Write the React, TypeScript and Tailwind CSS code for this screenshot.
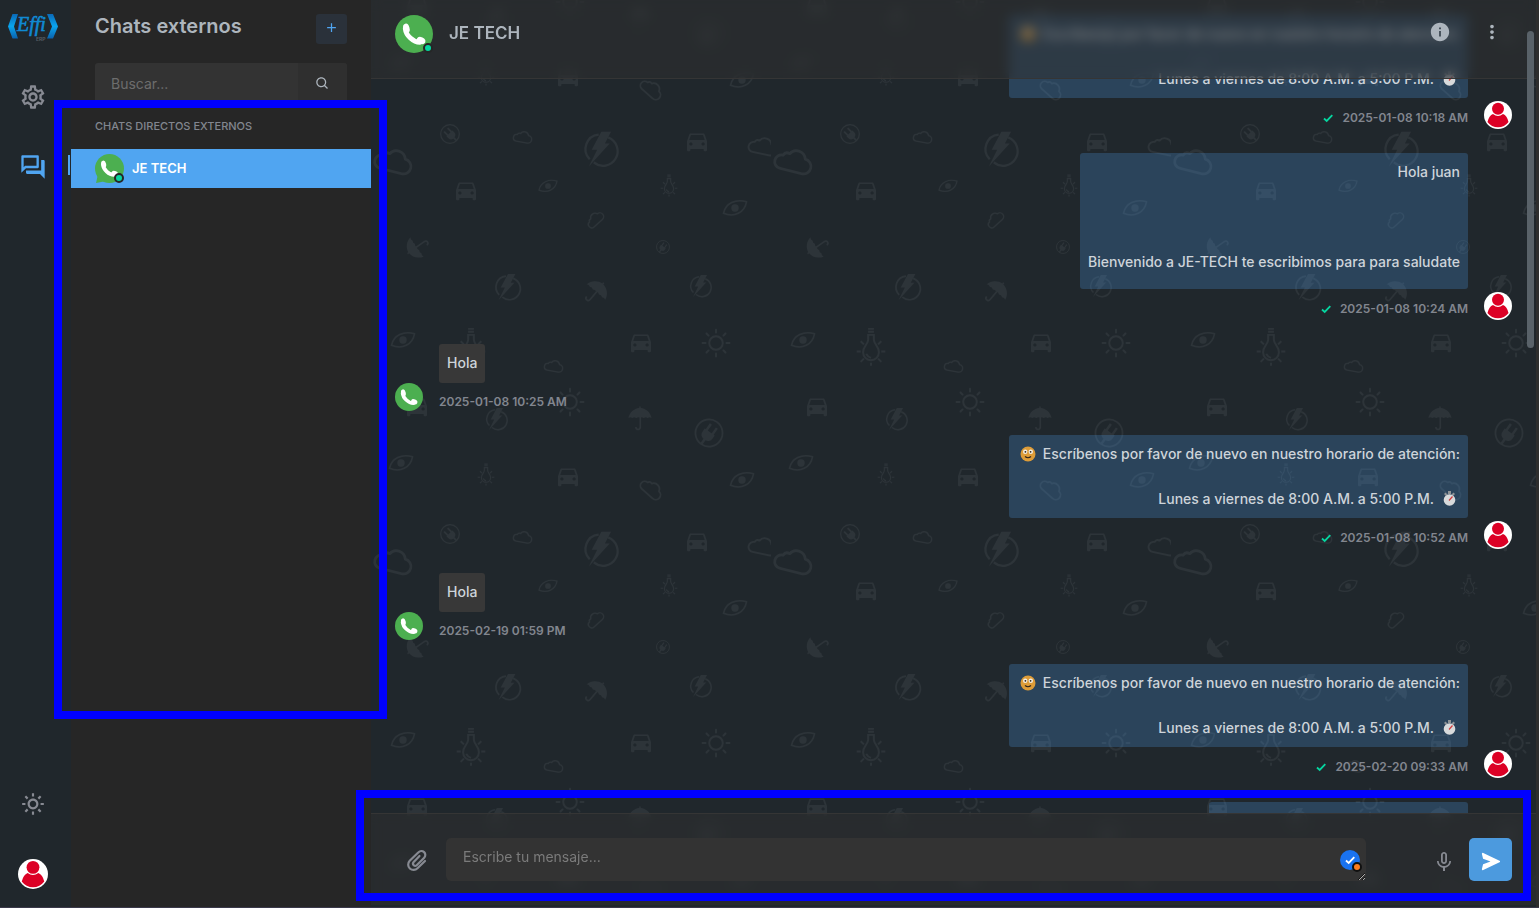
import React from 'react';
import {
  MdOutlineSettings,
  MdOutlineForum,
  MdDirectionsCar,
  MdMoreVert,
  MdInfo,
  MdMicNone,
} from 'react-icons/md';
import { BiSearch, BiSun, BiSolidSend, BiPlus } from 'react-icons/bi';

const PATTERN_COLOR = '#2d3439';

interface GlyphProps {
  x: number;
  y: number;
  size: number;
  rotate?: number;
}

// Every glyph is drawn on a 24x24 box centred on 0,0
const Place: React.FC<GlyphProps & { children: React.ReactNode }> = ({ x, y, size, rotate = 0, children }) => (
  <g transform={`translate(${x} ${y}) rotate(${rotate}) scale(${size / 24})`}>{children}</g>
);

const Car: React.FC<GlyphProps> = (props) => (
  <Place {...props}>
    <MdDirectionsCar x={-16} y={-17} size={32} color={PATTERN_COLOR} />
  </Place>
);

const Umbrella: React.FC<GlyphProps> = (props) => (
  <Place {...props}>
    <path d="M-12 0C-11-6-6-10-.7-10.500V-12H.7V-10.500C6-10 11-6 12 0Q10-1.500 8 0 6-1.500 4 0 2-1.500 0-.5-2-1.500-4 0-6-1.500-8 0-10-1.500-12 0Z" fill={PATTERN_COLOR} />
    <path d="M.3-1V9.500Q.3 12-2 12T-4.300 9.500" fill="none" stroke={PATTERN_COLOR} strokeWidth={1.6} />
  </Place>
);

const Eye: React.FC<GlyphProps> = (props) => (
  <Place {...props}>
    <path d="M-12 5.500C-10-5 1-10 12-6.500 10 5-1 10-12 5.500Z" fill="none" stroke={PATTERN_COLOR} strokeWidth={1.6} />
    <circle r={3.8} fill={PATTERN_COLOR} />
  </Place>
);

const Bolt: React.FC<GlyphProps> = (props) => (
  <Place {...props}>
    <path d="M6-8.300A10.600 10.600 0 1 1-4.500 9.800M-7.500 7.500A10.600 10.600 0 0 1-1-10.500" fill="none" stroke={PATTERN_COLOR} strokeWidth={1.6} />
    <path d="M1-12.500H8L3.500-4H7L-8 12.500-2 .5H-6Z" fill={PATTERN_COLOR} />
  </Place>
);

const Plug: React.FC<GlyphProps> = (props) => (
  <Place {...props}>
    <circle r={11.2} fill="none" stroke={PATTERN_COLOR} strokeWidth={1.4} />
    <path d="M-5-1H5V2Q5 6 1 6.500V11H-1V6.500Q-5 6-5 2ZM-4-7h2v6H-4ZM2-7h2v6H2Z" fill={PATTERN_COLOR} />
  </Place>
);

const Cloud: React.FC<GlyphProps & { stroke?: number }> = ({ stroke = 1.8, ...props }) => (
  <Place {...props}>
    <path
      d="M-8 7A4.500 4.500 0 0 1-8-2Q-7-5-4-4A6 6 0 0 1 7-3 5 5 0 0 1 7 7Z"
      fill="none"
      stroke={PATTERN_COLOR}
      strokeWidth={stroke}
      strokeLinejoin="round"
    />
  </Place>
);

const Sun: React.FC<GlyphProps> = (props) => (
  <Place {...props}>
    <circle r={5.8} fill="none" stroke={PATTERN_COLOR} strokeWidth={1.6} />
    {[0, 45, 90, 135, 180, 225, 270, 315].map((angle) => (
      <path key={angle} d="M0-11.500V-9" transform={`rotate(${angle})`} stroke={PATTERN_COLOR} strokeWidth={1.6} strokeLinecap="round" />
    ))}
  </Place>
);

const Bulb: React.FC<GlyphProps> = (props) => (
  <Place {...props}>
    <path
      d="M-1.800-7V-4C-1.800-1-5 0-5 4A5 5 0 0 0 5 4C5 0 1.800-1 1.800-4V-7ZM-1.800-9h3.600M-1.800-10.800h3.600M-3 5Q-2 7 0 7.500"
      fill="none"
      stroke={PATTERN_COLOR}
      strokeWidth={1.2}
    />
    <path d="M-9 3.500H-6.500M9 3.500H6.500M-6.500-3l2 2M6.500-3l-2 2M-6.500 10l2-2M6.500 10l-2-2M0 10.500V12.500" stroke={PATTERN_COLOR} strokeWidth={1.2} />
  </Place>
);

const ChatWallpaper = () => (
  <svg className="absolute inset-0 h-full w-full" aria-hidden="true">
    <defs>
      <pattern id="wallpaper" width={400} height={400} patternUnits="userSpaceOnUse">
        <Car x={197} y={77} size={20} />
        <Car x={326} y={142} size={20} />
        <Car x={95} y={191} size={20} />
        <Car x={270} y={343} size={20} />
        <Car x={46} y={7} size={20} />
        <Car x={46} y={407} size={20} />
        <Bolt x={229} y={149} size={33} />
        <Bolt x={136} y={287} size={25} />
        <Bolt x={329} y={286} size={21} />
        <Bolt x={125} y={19} size={21} />
        <Plug x={79} y={134} size={20} rotate={-45} />
        <Plug x={292} y={247} size={14} rotate={35} />
        <Plug x={338} y={33} size={29} rotate={35} />
        <Eye x={177} y={186} size={18} />
        <Eye x={364} y={208} size={23} />
        <Eye x={32} y={340} size={23} />
        <Eye x={30} y={63} size={23} />
        <Eye x={371} y={80} size={23} />
        <Eye x={-29} y={80} size={23} />
        <Cloud x={152} y={137} size={18} rotate={10} />
        <Cloud x={23} y={161} size={36} rotate={14} />
        <Cloud x={392} y={146} size={27} rotate={12} stroke={1.6} />
        <Cloud x={224} y={219} size={18} rotate={-42} />
        <Cloud x={183} y={366} size={18} rotate={10} />
        <Cloud x={281} y={89} size={23} rotate={42} />
        <Bulb x={298} y={185} size={22} />
        <Bulb x={100} y={346} size={38} />
        <Bulb x={115} y={74} size={22} />
        <Sun x={345} y={343} size={28} />
        <Sun x={199} y={2} size={28} />
        <Sun x={199} y={402} size={28} />
        <Umbrella x={46} y={247} size={23} rotate={-125} />
        <Umbrella x={225} y={292} size={24} rotate={40} />
        <Umbrella x={269} y={18} size={23} />
      </pattern>
    </defs>
    <rect width="100%" height="100%" fill="url(#wallpaper)" />
  </svg>
);

const EffiLogo = () => (
  <svg className="h-7 w-[50px]" viewBox="0 0 50 28" role="img" aria-label="Effi ERP">
    <defs>
      <linearGradient id="effi" x1="0" y1="0" x2="0" y2="1">
        <stop offset="0" stopColor="#0a69b8" />
        <stop offset="0.5" stopColor="#0aa5ee" />
        <stop offset="1" stopColor="#0a62ad" />
      </linearGradient>
    </defs>
    <path d="M4.500 1H10L6 13.500l4 12H4.500L0 13.500ZM39 1h6L50 13.500l-5 12H39l5-12Z" fill="url(#effi)" />
    <text x="9" y="18" fontFamily="Liberation Serif, serif" fontStyle="italic" fontSize="20" fill="#1089d3" stroke="#1089d3" strokeWidth="0.6">
      Effi
    </text>
    <text x="28" y="28" fontFamily="Inter, sans-serif" fontSize="5" fontWeight="600" fill="#5b6067">ERP</text>
  </svg>
);

const Tick: React.FC<{ className: string }> = ({ className }) => (
  <svg className={className} viewBox="0 0 12 12" fill="none" stroke="currentColor" strokeWidth={1.8} aria-hidden="true">
    <path d="M2 6.500 4.700 9 10.300 3.200" />
  </svg>
);

const UserAvatar: React.FC<{ className: string }> = ({ className }) => (
  <svg className={`shrink-0 ${className}`} viewBox="0 0 28 28" aria-hidden="true">
    <circle cx={14} cy={14} r={14} fill="#fff" />
    <path d="M3.500 21Q5 14.500 9 13Q14 17 19 13Q23 14.500 24.500 21A13 13 0 0 1 3.500 21Z" fill="#dc0025" />
    <circle cx={14} cy={7.8} r={6} fill="#dc0025" />
  </svg>
);

const PhoneAvatar: React.FC<{ className: string; tail?: boolean }> = ({ className, tail }) => (
  <svg className={`shrink-0 ${className}`} viewBox="0 0 28 28" aria-hidden="true">
    <circle cx={14} cy={14} r={14} fill="#4caf50" />
    {tail && <path d="M3 19 1 28 11 26Z" fill="#4caf50" />}
    <path d="M7.600 10C8 15 13.500 20.300 18.500 20.200" fill="none" stroke="#fff" strokeWidth={3.6} strokeLinecap="round" />
    <ellipse cx={8.4} cy={9.8} rx={2.3} ry={3.5} transform="rotate(-15 8.400 9.800)" fill="#fff" />
    <ellipse cx={19.2} cy={18.8} rx={3.3} ry={2.4} transform="rotate(25 19.200 18.800)" fill="#fff" />
  </svg>
);

const SmileEmoji = () => (
  <svg className="mx-[7px] inline-block h-4 w-4 align-[-3px]" viewBox="0 0 16 16" role="img" aria-label="🙂">
    <circle cx={8} cy={8} r={7.5} fill="#dd9c38" />
    <circle cx={5.2} cy={5.8} r={2.2} fill="#f4efe4" />
    <circle cx={10.8} cy={5.8} r={2.2} fill="#f4efe4" />
    <circle cx={5.4} cy={5.8} r={0.9} fill="#30241a" />
    <circle cx={10.6} cy={5.8} r={0.9} fill="#30241a" />
    <path d="M5 10.500Q8 13 11 10.500" fill="none" stroke="#30241a" strokeWidth={1.2} />
  </svg>
);

const StopwatchEmoji = () => (
  <svg className="mr-[3px] ml-2 inline-block h-[15px] w-[15px] align-[-2px]" viewBox="0 0 15 15" role="img" aria-label="⏱">
    <path d="M6 0h3v3H6ZM2 3l1.500-1.500 2 2L4 5ZM13 3l-1.500-1.500-2 2L11 5Z" fill="#8f9396" />
    <circle cx={7.5} cy={9} r={5.8} fill="#d8dadb" />
    <path d="M7 9.500 10.500 5.500" stroke="#d33a3a" strokeWidth={1.2} />
  </svg>
);

interface Message {
  id: number;
  kind: 'schedule' | 'welcome' | 'hello';
  time: string;
}

const MESSAGES: Message[] = [
  { id: 1, kind: 'schedule', time: '2025-01-08 10:18 AM' },
  { id: 2, kind: 'welcome', time: '2025-01-08 10:24 AM' },
  { id: 3, kind: 'hello', time: '2025-01-08 10:25 AM' },
  { id: 4, kind: 'schedule', time: '2025-01-08 10:52 AM' },
  { id: 5, kind: 'hello', time: '2025-02-19 01:59 PM' },
  { id: 6, kind: 'schedule', time: '2025-02-20 09:33 AM' },
];

const ReceivedMessage: React.FC<{ time: string }> = ({ time }) => (
  <li className="mb-6 flex items-end gap-4">
    <PhoneAvatar className="h-7 w-7" />
    <div>
      <p className="w-fit rounded-[3px] bg-[#383838] px-2 pt-[7px] pb-[9px] text-[14px] leading-[23px] font-medium">Hola</p>
      <p className="pt-[10px] text-[12px] leading-[18px] font-semibold text-[#82868f]">{time}</p>
    </div>
  </li>
);

const SentMessage: React.FC<{ message: Message }> = ({ message }) => (
  <li className="mb-6 flex items-end justify-end gap-4">
    <div className="flex flex-col items-end">
      {message.kind === 'welcome' ? (
        <div className="flex flex-col gap-[67px] rounded-[3px] bg-[#50a5f1]/24 px-2 pt-[7px] pb-4 text-right text-[14px] leading-[23px] font-medium">
          <p>Hola juan</p>
          <p>Bienvenido a JE-TECH te escribimos para para saludate</p>
        </div>
      ) : (
        <div className="flex flex-col gap-[22px] rounded-[3px] bg-[#50a5f1]/24 pt-[7px] pr-2 pb-2 pl-1 text-right text-[14px] leading-[23px] font-medium">
          <p>
            <SmileEmoji />
            Escríbenos por favor de nuevo en nuestro horario de atención:
          </p>
          <p>
            Lunes a viernes de 8:00 A.M. a 5:00 P.M.
            <StopwatchEmoji />
          </p>
        </div>
      )}
      <p className="flex items-center gap-2 pt-2 text-[12px] leading-[23px] font-semibold text-[#82868f]">
        <Tick className="h-3 w-3 text-[#06d6a0]" />
        {message.time}
      </p>
    </div>
    <UserAvatar className="h-7 w-7" />
  </li>
);

const NavRail = () => (
  <nav className="flex w-[71px] shrink-0 flex-col items-center bg-[#20272c] pt-[13px] pr-[5px] pb-[18px] text-[#878a92]">
    <a href="#inicio" aria-label="Inicio">
      <EffiLogo />
    </a>
    <a href="#ajustes" aria-label="Ajustes" className="mt-[42px]">
      <MdOutlineSettings size={28} />
    </a>
    <a href="#chats" aria-label="Chats" className="mt-[42px] text-[#50a5f1]">
      <MdOutlineForum size={28} />
    </a>
    <button type="button" aria-label="Cambiar tema" className="mt-auto">
      <BiSun size={26} />
    </button>
    <button type="button" aria-label="Perfil" className="mt-[42px]">
      <UserAvatar className="h-[30px] w-[30px]" />
    </button>
  </nav>
);

const ChatSidebar = () => (
  <aside className="w-[300px] shrink-0 bg-[#262626]">
    <div className="px-6">
      <div className="flex items-start justify-between pt-[14px]">
        <h1 className="text-[20px] leading-6 font-semibold text-[#adb5bd]">Chats externos</h1>
        <button type="button" aria-label="Nuevo chat" className="flex h-[30px] w-[31px] items-center justify-center rounded-[3px] bg-[#2a313a] pb-1 text-[#50a5f1]">
          <BiPlus size={15} />
        </button>
      </div>
      <div className="mt-[19px] flex h-10 overflow-hidden rounded-[3px] bg-[#333]">
        <input
          type="search"
          aria-label="Buscar"
          placeholder="Buscar..."
          className="min-w-0 flex-1 bg-transparent px-4 text-[14px] outline-none placeholder:text-[#6d6d6d]"
        />
        <button type="button" aria-label="Buscar chat" className="flex w-[49px] items-center justify-center bg-[#2f2f2f] text-[#adb5bd]">
          <BiSearch size={15} />
        </button>
      </div>
    </div>
    <h2 className="mt-[15px] px-6 text-[11px] leading-4 font-medium text-[#82868f]">CHATS DIRECTOS EXTERNOS</h2>
    <a href="#je-tech" className="mt-[15px] flex h-[39px] items-center gap-2 bg-[#50a5f1] px-6 text-[13px] font-semibold text-white">
      <span className="relative">
        <PhoneAvatar className="h-[29px] w-[29px]" tail />
        <span className="absolute right-0 bottom-0 h-[10px] w-[10px] rounded-full border-2 border-[#262626] bg-[#06d6a0]" />
      </span>
      JE TECH
    </a>
  </aside>
);

const ChatHeader = () => (
  <header className="absolute inset-x-0 top-0 flex h-[79px] items-start border-b border-[#353535] bg-[#303030]/50 px-6 pt-[15px] text-[#adb5bd] backdrop-blur-[6px]">
    <span className="relative">
      <PhoneAvatar className="h-[38px] w-[38px]" />
      <span className="absolute right-0 bottom-0 h-[10px] w-[10px] rounded-full border-2 border-[#262626] bg-[#06d6a0]" />
    </span>
    <h2 className="ml-4 text-[17px] leading-9 font-semibold">JE TECH</h2>
    <button type="button" aria-label="Información" className="mt-[6px] ml-auto">
      <MdInfo size={22} />
    </button>
    <button type="button" aria-label="Más opciones" className="mt-[6px] mr-[9px] ml-[30px]">
      <MdMoreVert size={22} />
    </button>
  </header>
);

const MessageBar = () => (
  <form className="relative mb-[2px] flex items-start border-t border-[#353535] bg-[#303030]/50 p-6 text-[#878a92] backdrop-blur-[6px]">
    <button type="button" aria-label="Adjuntar archivo" className="mr-2 flex h-[43px] w-[43px] items-center justify-center">
      <svg className="h-6 w-6" viewBox="0 0 24 24" fill="none" stroke="currentColor" strokeWidth={2.2} strokeLinecap="round">
        <path d="M20 13 12.500 20.300A5.300 5.300 0 0 1 4.700 12.800L13.500 4.200A3.900 3.900 0 0 1 19.200 9.700L11.700 17.200A2.200 2.200 0 0 1 8.500 14.200L14.500 8" />
      </svg>
    </button>
    <div className="relative mr-14 flex-1">
      <textarea
        aria-label="Mensaje"
        placeholder="Escribe tu mensaje..."
        className="block h-[43px] w-full rounded-[5px] bg-[#333] px-[17px] pt-[7px] text-[14px] leading-[23px] outline-none placeholder:text-[#7b7b7b]"
      />
      <span className="absolute top-3 right-[6px] flex h-5 w-5 items-center justify-center rounded-full bg-[#1a73f0] text-white">
        <Tick className="h-3 w-3" />
        <span className="absolute -right-[2px] -bottom-[2px] h-[10px] w-[10px] rounded-full border-2 border-[#111] bg-[#ff7d1f]" />
      </span>
    </div>
    <button type="button" aria-label="Grabar audio" className="mr-1 flex h-[43px] w-[43px] items-center justify-center pt-1">
      <MdMicNone size={24} />
    </button>
    <button type="submit" aria-label="Enviar" className="flex h-[43px] w-[43px] items-center justify-center rounded-[5px] bg-[#4c9ade] pt-1 text-white">
      <BiSolidSend size={23} />
    </button>
  </form>
);

const App: React.FC = () => {
  return (
    <div className="relative flex h-screen overflow-hidden border-b border-[#3a394a] bg-[#2e2e2e] pr-[3px] font-[Inter,sans-serif] text-[#ced4da]">
      <NavRail />
      <ChatSidebar />

      <main className="relative flex min-w-0 flex-1 flex-col bg-[#20272c]">
        <ChatWallpaper />
        <ul className="relative min-h-0 flex-1 overflow-hidden px-6 pt-[15px]">
          {MESSAGES.map((message) =>
            message.kind === 'hello' ? (
              <ReceivedMessage key={message.id} time={message.time} />
            ) : (
              <SentMessage key={message.id} message={message} />
            )
          )}
          <li className="mr-11 ml-auto h-10 w-[259px] rounded-[3px] bg-[#50a5f1]/24" />
        </ul>
        <ChatHeader />
        <MessageBar />

        {/* Scroll thumb */}
        <div className="absolute top-[31px] right-[2px] h-[317px] w-[7px] rounded-full bg-[#596269]" />
        {/* Message bar highlight */}
        <div className="pointer-events-none absolute -left-[15px] right-[5px] bottom-[6px] h-[111px] border-8 border-[#0000ff]" />
      </main>

      {/* Active tab marker and chat list highlight */}
      <div className="absolute top-[155px] left-[68px] h-5 w-[2px] bg-[#50a5f1]" />
      <div className="pointer-events-none absolute top-[100px] left-[54px] h-[619px] w-[333px] border-8 border-[#0000ff]" />
    </div>
  );
};

export default App;
